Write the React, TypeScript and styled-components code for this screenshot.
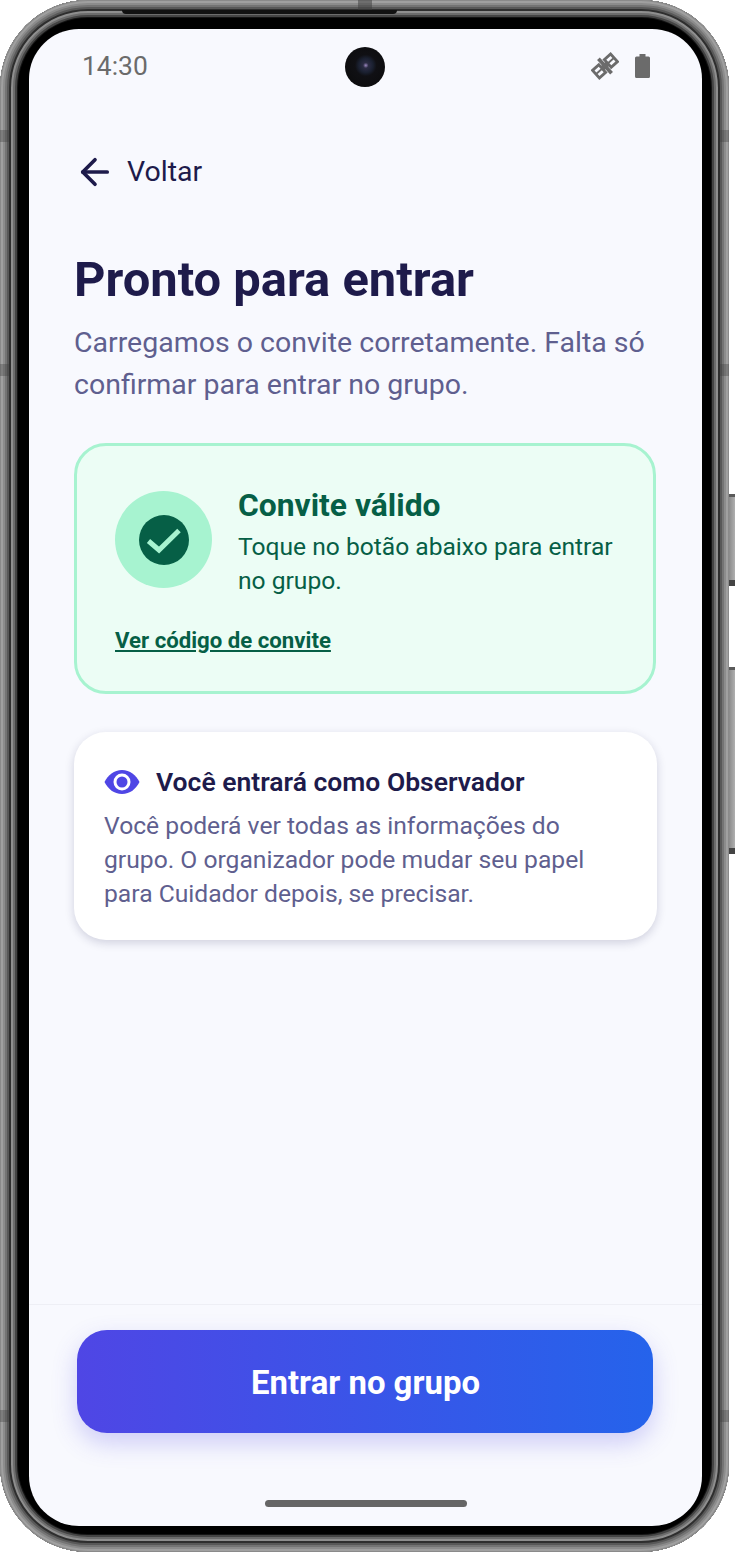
import React from "react";
import styled, { createGlobalStyle } from "styled-components";
import { ArrowLeft } from "lucide-react";

const Global = createGlobalStyle`
  html, body { margin: 0; padding: 0; background: #fff; }
  body { font-family: Roboto, "Noto Sans", sans-serif; }
  * { box-sizing: border-box; }
`;

const Stage = styled.div`
  position: relative;
  width: 735px;
  height: 1553px;
  overflow: hidden;
`;

const Frame = styled.div`
  position: relative;
  z-index: 1;
  width: 729px;
  height: 1552px;
  padding: 29px 27px 26px 29px;
  border-radius: 88px;
  background: #000;
  box-shadow:
    inset 0 0 0 1px #8a8a8a,
    inset 0 0 0 3px #a0a0a0,
    inset 0 0 0 5px #8c8c8c,
    inset 0 0 0 7px #747474,
    inset 0 0 0 9px #585858,
    inset 0 0 0 11px #2e2e2e,
    inset 0 0 0 13px #8e8e8e,
    inset 0 0 0 15px #6c6c6c,
    inset 0 0 0 17px #444,
    inset 0 0 0 18px #141414;
`;

const TopBar = styled.div`
  position: absolute;
  left: 122px;
  top: 10px;
  width: 275px;
  height: 4px;
  border-radius: 0 0 6px 6px;
  background: #111;
`;

const TopBand = styled.div`
  position: absolute;
  left: 358px;
  top: 0;
  width: 14px;
  height: 10px;
  background: rgba(60, 60, 60, 0.5);
`;

const EdgeBand = styled.div<{ $side: "left" | "right"; $top: number }>`
  position: absolute;
  ${(p) => p.$side}: 0;
  top: ${(p) => p.$top}px;
  width: 9px;
  height: 12px;
  background: rgba(60, 60, 60, 0.35);
`;

const SideButton = styled.div<{ $top: number; $height: number }>`
  position: absolute;
  right: 0;
  top: ${(p) => p.$top}px;
  width: 6px;
  height: ${(p) => p.$height}px;
  background: linear-gradient(90deg, #8a8a8a, #b0b0b0);
  border-top: 3px solid #5a5a5a;
  border-bottom: 6px solid #444;
`;

const Screen = styled.div`
  position: relative;
  width: 673px;
  height: 1497px;
  border-radius: 50px;
  overflow: hidden;
  background: #f8f9fe;
  display: flex;
  flex-direction: column;
`;

const StatusBar = styled.div`
  position: relative;
  height: 75px;
  flex: none;
  display: flex;
  align-items: center;
  justify-content: space-between;
  padding: 0 52px 0 53px;
  color: #6b6b6b;
`;

const Time = styled.span`
  font-size: 26.4px;
  line-height: 30px;
  margin-top: -2px;
`;

const Camera = styled.div`
  position: absolute;
  left: 316px;
  top: 18px;
  width: 40px;
  height: 40px;
  border-radius: 50%;
  background: radial-gradient(circle at 52% 46%, #9c88c0 0, #2c2c44 9%, #1a2030 24%, #101014 36%, #0a0a0a 100%);
`;

const StatusIcons = styled.div`
  display: flex;
  align-items: center;
  gap: 16px;
  margin-top: -1px;
`;

const Content = styled.main`
  flex: 1;
  padding: 43px 45px 0 45px;
`;

const BackRow = styled.div`
  display: flex;
  align-items: center;
  gap: 11px;
  height: 50px;
  color: #1e1b4b;
`;

const BackLabel = styled.span`
  font-size: 28.5px;
  line-height: 50px;
`;

const Title = styled.h1`
  margin: 53px 0 0;
  font-size: 48.9px;
  line-height: 60px;
  font-weight: 700;
  color: #1e1b4b;
`;

const Subtitle = styled.p`
  margin: 12px 0 0;
  font-size: 28.5px;
  line-height: 42px;
  color: #5f5f8f;
`;

const ValidCard = styled.section`
  margin-top: 37px;
  width: 582px;
  height: 251px;
  padding: 45px 38px 0;
  border: 3px solid #a7f3d0;
  border-radius: 32px;
  background: #ecfdf5;
`;

const ValidRow = styled.div`
  display: flex;
  gap: 26px;
`;

const Badge = styled.div`
  flex: none;
  width: 97px;
  height: 97px;
  border-radius: 50%;
  background: #a7f3d0;
  display: flex;
  align-items: center;
  justify-content: center;
`;

const ValidText = styled.div`
  margin-top: -2px;
  color: #065f46;
`;

const ValidTitle = styled.h2`
  margin: 0;
  font-size: 31.8px;
  line-height: 32px;
  font-weight: 700;
`;

const ValidBody = styled.p`
  margin: 9px 0 0;
  font-size: 24.6px;
  line-height: 34px;
`;

const CodeLink = styled.a`
  display: block;
  margin-top: 27px;
  font-size: 22.2px;
  line-height: 30px;
  font-weight: 700;
  color: #065f46;
  text-decoration: underline;
`;

const RoleCard = styled.section`
  margin-top: 38px;
  width: 583px;
  height: 208px;
  padding: 32px 30px 0;
  border-radius: 32px;
  background: #fff;
  box-shadow: 0 3px 10px rgba(30, 27, 75, 0.18);
`;

const RoleHead = styled.div`
  display: flex;
  align-items: center;
  gap: 16px;
`;

const RoleTitle = styled.h3`
  margin: 0;
  font-size: 26.5px;
  line-height: 36px;
  font-weight: 600;
  color: #1e1b4b;
`;

const RoleBody = styled.p`
  margin: 9px 0 0;
  font-size: 24.67px;
  line-height: 34px;
  color: #5f5f8f;
`;

const Footer = styled.footer`
  flex: none;
  height: 222px;
  border-top: 1px solid #eeeff5;
  padding: 25px 48px 0;
  display: flex;
  flex-direction: column;
  align-items: flex-start;
`;

const JoinButton = styled.button`
  width: 576px;
  height: 103px;
  flex: none;
  border: 0;
  padding: 2px 0 0 1px;
  border-radius: 30px;
  background: linear-gradient(90deg, #4f46e5, #2563eb);
  color: #fff;
  font-family: inherit;
  font-size: 32.9px;
  font-weight: 700;
  box-shadow: 0 10px 24px rgba(79, 70, 229, 0.25);
`;

const HomePill = styled.div`
  margin: 67px 0 0 188px;
  width: 202px;
  height: 7px;
  border-radius: 4px;
  background: #666;
`;

const Satellite = () => (
  <svg width="28" height="28" viewBox="0 0 30 30" fill="#6b6b6b">
    <g transform="rotate(-42 15 15)" fillRule="evenodd">
      <path d="M0.500 8h12v14h-12z M3.500 11v3h6v-3z M3.500 16v3h6v-3z" />
      <path d="M17.500 8h12v14h-12z M20.500 11v3h6v-3z M20.500 16v3h6v-3z" />
      <rect x="11" y="12" width="8" height="6" />
      <rect x="13" y="4.500" width="4" height="21" />
    </g>
  </svg>
);

const Battery = () => (
  <svg width="15" height="24" viewBox="0 0 15 24" fill="#6b6b6b">
    <path d="M4.500 0h6v2.500h3a1.500 1.500 0 0 1 1.500 1.500v18.500a1.500 1.500 0 0 1-1.500 1.500h-12A1.500 1.500 0 0 1 0 22.500V4a1.500 1.500 0 0 1 1.500-1.500h3z" />
  </svg>
);

const CheckMark = () => (
  <svg width="50" height="50" viewBox="0 0 50 50">
    <circle cx="25" cy="25" r="25" fill="#065f46" />
    <path d="M9.500 26l10.500 9L40 15.500" fill="none" stroke="#a7f3d0" strokeWidth="5" />
  </svg>
);

const Eye = () => (
  <svg width="36" height="24" viewBox="0 0 36 24">
    <path d="M18 0C10 0 4 5 0.500 12 4 19 10 24 18 24s14-5 17.500-12C32 5 26 0 18 0z" fill="#4f46e5" />
    <circle cx="18" cy="12" r="8.500" fill="#fff" />
    <circle cx="18" cy="12" r="5.500" fill="#4f46e5" />
  </svg>
);

export default function App() {
  return (
    <Stage>
      <Global />
      <Frame>
        <TopBar />
        <TopBand />
        <EdgeBand $side="left" $top={130} />
        <EdgeBand $side="left" $top={364} />
        <EdgeBand $side="left" $top={1410} />
        <EdgeBand $side="right" $top={130} />
        <EdgeBand $side="right" $top={364} />
        <EdgeBand $side="right" $top={1410} />
        <Screen>
          <StatusBar>
            <Time>14:30</Time>
            <Camera />
            <StatusIcons>
              <Satellite />
              <Battery />
            </StatusIcons>
          </StatusBar>
          <Content>
            <BackRow>
              <ArrowLeft size={42} strokeWidth={2.1} />
              <BackLabel>Voltar</BackLabel>
            </BackRow>
            <Title>Pronto para entrar</Title>
            <Subtitle>
              Carregamos o convite corretamente. Falta só
              <br />
              confirmar para entrar no grupo.
            </Subtitle>
            <ValidCard>
              <ValidRow>
                <Badge>
                  <CheckMark />
                </Badge>
                <ValidText>
                  <ValidTitle>Convite válido</ValidTitle>
                  <ValidBody>
                    Toque no botão abaixo para entrar
                    <br />
                    no grupo.
                  </ValidBody>
                </ValidText>
              </ValidRow>
              <CodeLink>Ver código de convite</CodeLink>
            </ValidCard>
            <RoleCard>
              <RoleHead>
                <Eye />
                <RoleTitle>Você entrará como Observador</RoleTitle>
              </RoleHead>
              <RoleBody>
                Você poderá ver todas as informações do
                <br />
                grupo. O organizador pode mudar seu papel
                <br />
                para Cuidador depois, se precisar.
              </RoleBody>
            </RoleCard>
          </Content>
          <Footer>
            <JoinButton>Entrar no grupo</JoinButton>
            <HomePill />
          </Footer>
        </Screen>
      </Frame>
      <SideButton $top={494} $height={92} />
      <SideButton $top={667} $height={187} />
    </Stage>
  );
}
